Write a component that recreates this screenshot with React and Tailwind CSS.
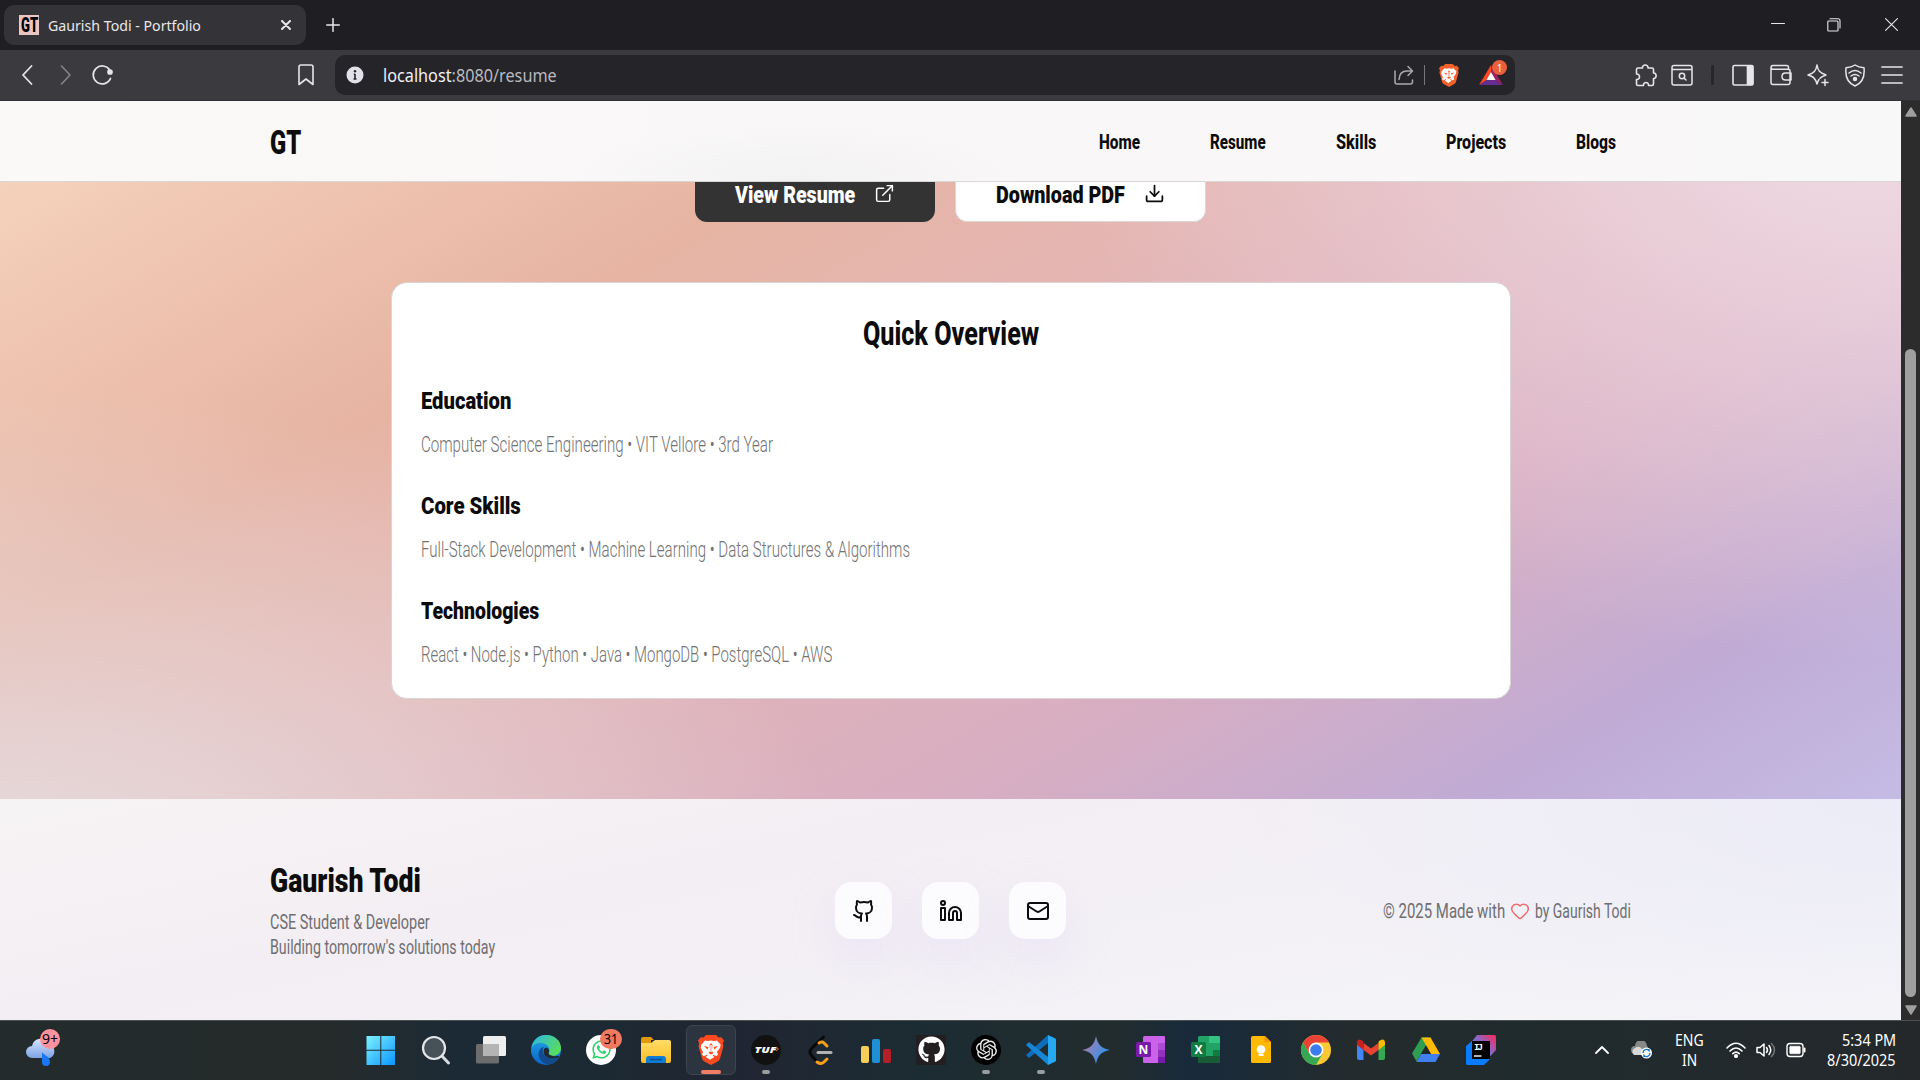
import React, { useLayoutEffect, useRef, useState } from "react";
import { ExternalLink, Download, Github, Linkedin, Mail, Heart } from "lucide-react";
import { SiOpenai } from "react-icons/si";
import { FaWhatsapp, FaGithub } from "react-icons/fa";

/* Text condensed or stretched so that it fills the width given by its class. */
function Fit({ className = "", children }) {
  const outer = useRef(null);
  const inner = useRef(null);
  const [scale, setScale] = useState(1);
  useLayoutEffect(() => {
    setScale(outer.current.getBoundingClientRect().width / inner.current.offsetWidth);
  }, [children]);
  return (
    <span ref={outer} className={"block shrink-0 whitespace-nowrap " + className}>
      <span ref={inner} className="inline-block origin-left" style={{ transform: `scaleX(${scale})` }}>
        {children}
      </span>
    </span>
  );
}

const Ico = ({ className = "", children, vb = "0 0 24 24", sw = 1.5 }) => (
  <svg viewBox={vb} fill="none" stroke="currentColor" strokeWidth={sw} strokeLinecap="round" strokeLinejoin="round" className={"block shrink-0 " + className}>
    {children}
  </svg>
);

const Brave = ({ className }) => (
  <svg viewBox="0 0 26 30" className={"block shrink-0 " + className}>
    <path d="M8 0h10l2.500 2.500 2.800-.3L26 5.500l-1.200 3 .7 2.500L22 23.500q-.5 1.700-2 2.700L13 30l-7-3.800q-1.500-1-2-2.700L.5 11l.7-2.500L0 5.500l2.700-3.300 2.800.3z" fill="currentColor" />
    <path d="M7 5.500l3 .6 3-.6 3 .6 3-.6 3.700 4.300-.7 3-3 4.200 1 2.800-2 1.500-2.500-1.500h-1.200l2 2.200-4.300 2.700-4.300-2.700 2-2.200H8.500L6 21.300l-2-1.500L5 17 2.700 12.800 3.300 9.800z" fill="#fff" />
    <path d="M6 11l4.500 1-1 2.500zM20 11l-4.500 1 1 2.500zM11.500 10l.7 6-1.700 2 2.500 1.500 2.500-1.500-1.700-2 .7-6-1.500-2z" fill="currentColor" />
    <path d="M12.300 10h1.400v7h-1.400z" fill="#fff" />
  </svg>
);

function TabStrip() {
  return (
    <div className="flex h-[50px] items-start bg-[#1f1e23] text-[#e8e8ea]">
      <div className="mt-[5px] ml-1 flex h-10 w-[302px] items-center rounded-[10px] bg-[#343338] pl-[15px]">
        <div className="flex h-5 w-5 items-center justify-center bg-[#eac5c3] font-['Roboto',sans-serif] text-[20px] leading-5 font-black text-black">
          <Fit className="w-[17px]">GT</Fit>
        </div>
        <Fit className="ml-[9px] w-[153px] pb-px font-['Noto_Sans',sans-serif] text-[15px] leading-5">Gaurish Todi - Portfolio</Fit>
        <Ico className="ml-20 h-[10px] w-[10px]" vb="0 0 10 10" sw={2}><path d="M1 1l8 8M9 1l-8 8" /></Ico>
      </div>
      <Ico className="mt-[18px] ml-[20px] h-[14px] w-[14px]" vb="0 0 14 14" sw={1.5}><path d="M7 .7v12.6M.7 7h12.6" /></Ico>
      <Ico className="mt-[17px] ml-auto h-[14px] w-[14px]" vb="0 0 14 14" sw={1}><path d="M.5 6.5h13" /></Ico>
      <Ico className="mt-[18px] ml-[42px] h-[14px] w-[14px]" vb="0 0 14 14" sw={1.1}><path d="M1.5 3h8.5q1 0 1 1v8.400q0 .6-.7.6H1.500q-.7 0-.7-.7V3.700q0-.7.7-.7zM3 .8h8q2 0 2 2V10" /></Ico>
      <Ico className="mt-[18px] mr-[22px] ml-[44px] h-[13px] w-[13px]" vb="0 0 14 14" sw={1.2}><path d="M.6.6l12.800 12.800M13.400.6L.6 13.400" /></Ico>
    </div>
  );
}

function Toolbar() {
  return (
    <div className="flex h-[51px] items-center border-b border-[#302f35] bg-[#3b3a3f] text-[#e6e6e8]">
      <Ico className="ml-[21px] h-5 w-3" vb="0 0 12 20" sw={1.8}><path d="M10.500 1L2 10l8.500 9" /></Ico>
      <Ico className="ml-[27px] h-5 w-3 text-[#858489]" vb="0 0 12 20" sw={1.600}><path d="M1.500 1L10 10l-8.500 9" /></Ico>
      <Ico className="ml-[19px] h-[22px] w-[22px]" vb="0 0 22 22" sw={1.7}><path d="M19.500 14.500a9 9 0 1 1-.8-8.600" /><circle cx="19" cy="8" r="2" fill="currentColor" /></Ico>
      <Ico className="ml-[185px] h-[22px] w-4" vb="0 0 16 22" sw={1.600}><path d="M3 1h10q2 0 2 2v17.500l-7-5.500-7 5.500V3q0-2 2-2z" /></Ico>
      <div className="ml-[21px] flex h-10 w-[1180px] items-center rounded-[10px] bg-[#252429]">
        <svg viewBox="0 0 18 18" className="ml-[11px] h-[18px] w-[18px]"><circle cx="9" cy="9" r="8.500" fill="#e2e0e8" /><path d="M9 8v5M7.800 8.200H9M7.500 13h3" stroke="#252429" strokeWidth="1.600" fill="none" /><circle cx="9" cy="5.300" r="1.200" fill="#252429" /></svg>
        <Fit className="ml-[19px] w-[174px] pb-px font-['Noto_Sans',sans-serif] text-[18px] leading-6 text-[#b9b9be]"><span className="text-[#f0f0f2]">localhost</span>:8080/resume</Fit>
        <Ico className="ml-auto h-5 w-5 text-[#aaa9ad]" vb="0 0 20 20" sw={1.500}><path d="M1 6v11q0 2 2 2h13.500q2 0 2-2v-2M5 14.500q.5-8.500 8-8.500h5M14 1.500l4.500 4.500L14 10.500" /></Ico>
        <span className="mr-[14px] ml-[10px] h-5 w-px bg-[#77767b]" />
        <Brave className="h-[23px] w-[20px] text-[#f2602c]" />
        <div className="relative mr-[12px] ml-[20px] h-[20px] w-6">
          <svg viewBox="0 0 24 20" className="h-5 w-6"><path d="M12 0L0 20l8-5 4-8z" fill="#ff4724" /><path d="M12 0v7l4 8 8 5z" fill="#9e1f63" /><path d="M0 20h24l-8-5H8z" fill="#662d91" /><path d="M12 7l-4.500 8h9z" fill="#fff" /></svg>
          <span className="absolute top-[-5px] left-[13px] flex h-[15px] w-[15px] items-center justify-center rounded-full bg-[#ec5f3d] font-['Noto_Sans',sans-serif] text-[10px] leading-none text-white">1</span>
        </div>
      </div>
      <div className="ml-auto flex items-center">
        <Ico className="h-[23px] w-[22px]" vb="0 0 22 23" sw={1.600}><path d="M3 4h4.500c-.5-4 6-4 5.500 0H17q1.500 0 1.500 1.500V9c3.500-.5 3.500 6 0 5.500V20q0 1.500-1.500 1.500h-3.500c.5-4-5.500-4-5 0H3q-1.500 0-1.500-1.500v-4.500c4 .5 4-6 0-5.500V5.500Q1.500 4 3 4z" /></Ico>
        <Ico className="ml-[14px] h-[22px] w-[22px]" vb="0 0 22 22" sw={1.500}><path d="M3 1.500h16q2 0 2 2V19q0 2-2 2H3q-2 0-2-2V3.500q0-2 2-2zM1 5.500h20M13 14l2 2" /><circle cx="11" cy="12" r="2.700" /></Ico>
        <span className="mr-[18px] ml-[18px] h-5 w-[3px] rounded bg-[#27262b]" />
        <Ico className="h-[22px] w-[22px]" vb="0 0 22 22" sw={1.600}><rect x="1" y="1.500" width="20" height="19.500" rx="1.500" /><path d="M15.500 2h5v18.500h-5z" fill="currentColor" /></Ico>
        <Ico className="ml-4 h-[22px] w-[22px]" vb="0 0 22 22" sw={1.500}><path d="M1 3.500V18.500q0 2 2 2h15q2 0 2-2V7q0-1.700-2-1.700H3Q1 5.300 1 3.500t2-2h13.500q2 0 2 2v1.500M21 9h-5.500q-3.500 0-3.500 3.500t3.500 3.500H21z" /></Ico>
        <Ico className="ml-[15px] h-[23px] w-[22px]" vb="0 0 22 23" sw={1.500}><path d="M10 1c1 6 2.500 7.500 9 10-3 1-4.500 1.500-6 3.200M10 1c-1 6-3 8-9 10 5 1.500 7 2.500 9 9 .7-2 1-3 2-4.500" /><path d="M18 15.500v6M15 18.500h6" /></Ico>
        <Ico className="ml-[15px] h-[23px] w-[22px]" vb="0 0 22 23" sw={1.500}><path d="M11 1c3 2 5.500 2.500 9 2.800 1 9-1.500 15-9 18.200C3.500 18.800 1 12.800 2 3.800 5.500 3.500 8 3 11 1zM5 9q6-5 12 0M7 12q4-3 8 0" /><circle cx="11" cy="15" r="1.500" fill="currentColor" /></Ico>
        <Ico className="mr-[17px] ml-[15px] h-[20px] w-[22px]" vb="0 0 22 20" sw={1.700}><path d="M1 2h20M1 10h20M1 18h20" /></Ico>
      </div>
    </div>
  );
}

function SiteNav() {
  return (
    <nav className="z-10 flex h-[81px] shrink-0 items-center border-b border-[#d9d6d6] bg-[radial-gradient(ellipse_220px_60px_at_800px_81px,#f3f2f2_0%,#f3f2f200_100%),linear-gradient(90deg,#faf9f7_0%,#f9f7f8_50%,#f9f8f9_100%)] pt-[2px] pl-[270px] font-['Roboto',sans-serif] font-black text-[#0c0c0c]">
      <Fit className="w-[31px] pt-px text-[33px] leading-[40px]">GT</Fit>
      <div className="ml-auto flex gap-[70px] pt-[2px] pr-[285px] text-[19.5px] leading-7 font-extrabold">
        <Fit className="w-[41px]">Home</Fit>
        <Fit className="w-[56px]">Resume</Fit>
        <Fit className="w-[40px]">Skills</Fit>
        <Fit className="w-[60px]">Projects</Fit>
        <Fit className="w-[40px]">Blogs</Fit>
      </div>
    </nav>
  );
}

const SECTIONS = [
  ["Education", "w-[90px]", "Computer Science Engineering • VIT Vellore • 3rd Year", "w-[352px]"],
  ["Core Skills", "w-[100px]", "Full-Stack Development • Machine Learning • Data Structures & Algorithms", "w-[489px]"],
  ["Technologies", "w-[118px]", "React • Node.js • Python • Java • MongoDB • PostgreSQL • AWS", "w-[411px]"],
];

function Resume() {
  return (
    <main className="flex h-[617px] shrink-0 flex-col font-['Roboto',sans-serif] text-[#0c0c0c]">
      <div className="-mt-[24px] flex h-16 justify-center gap-[20px] font-black">
        <div className="flex w-[240px] items-center rounded-xl bg-[#333] pt-[9px] pl-10 text-white">
          <Fit className="w-[120px] text-[24.5px] leading-8">View Resume</Fit>
          <ExternalLink className="mb-[2px] ml-[19px] h-[21px] w-[21px]" strokeWidth={1.7} />
        </div>
        <div className="flex w-[251px] items-center rounded-xl border border-[#dcd8d8] bg-white pt-[9px] pl-10">
          <Fit className="w-[129px] text-[24.5px] leading-8">Download PDF</Fit>
          <Download className="mb-[2px] ml-[19px] h-[21px] w-[21px]" strokeWidth={2} />
        </div>
      </div>
      <section className="mx-auto mt-[60px] h-[417px] w-[1120px] rounded-2xl border border-[#d9d5d6] bg-white px-[29px] pt-[33px]">
        <h2 className="flex justify-center text-[33px] leading-9 font-extrabold"><Fit className="w-[176px]">Quick Overview</Fit></h2>
        <div className="mt-[35px] flex flex-col gap-[33px]">
          {SECTIONS.map(([title, tw, text, dw]) => (
            <div key={title} className="flex flex-col gap-4">
              <h3 className="text-[24.7px] leading-7 font-black"><Fit className={tw}>{title}</Fit></h3>
              <p className="text-[22px] leading-7 font-light text-[#737373]"><Fit className={dw}>{text}</Fit></p>
            </div>
          ))}
        </div>
      </section>
    </main>
  );
}

const Tile = ({ children }) => (
  <div className="flex h-[57px] w-[57px] items-center justify-center rounded-2xl bg-[#fcfbfd] text-[#0c0c0c] shadow-[0_20px_40px_rgba(222,208,250,0.35)]">{children}</div>
);

function Footer() {
  return (
    <footer className="grid h-[221px] shrink-0 grid-cols-[1fr_auto_1fr] items-center bg-[radial-gradient(ellipse_700px_260px_at_1901px_0px,#ececf8_0%,#ececf800_100%),linear-gradient(168deg,#f6f3f4_0%,#f3eef3_35%,#f3f2f6_75%,#f5f5f8_100%)] pt-[2px] pr-[270px] pl-[270px] font-['Roboto',sans-serif] text-[#6f6e72]">
      <div className="flex flex-col">
        <Fit className="w-[151px] text-[33px] leading-10 font-black text-[#0c0c0c]">Gaurish Todi</Fit>
        <Fit className="mt-[9px] w-[160px] text-[19.5px] leading-[25px]">CSE Student &amp; Developer</Fit>
        <Fit className="w-[225px] text-[19.5px] leading-[25px]">Building tomorrow&apos;s solutions today</Fit>
      </div>
      <div className="flex gap-[30px]">
        <Tile><Github className="h-6 w-6" /></Tile>
        <Tile><Linkedin className="h-6 w-6" /></Tile>
        <Tile><Mail className="h-6 w-6" /></Tile>
      </div>
      <div className="flex items-center justify-end text-[19.5px] leading-7">
        <Fit className="w-[122px] pt-[2px]">© 2025 Made with</Fit>
        <Heart className="mx-[5px] h-5 w-5 text-[#ef6b6b]" strokeWidth={1.800} />
        <Fit className="w-[96px] pt-[2px]">by Gaurish Todi</Fit>
      </div>
    </footer>
  );
}

function Scrollbar() {
  return (
    <div className="flex w-[19px] flex-col items-center bg-[#2c2c2c]">
      <svg viewBox="0 0 12 10" className="mt-[6px] h-[10px] w-3"><path d="M6 1l5 8H1z" fill="#9f9f9f" stroke="#9f9f9f" strokeWidth="1.500" strokeLinejoin="round" /></svg>
      <div className="mt-[232px] h-[648px] w-[11px] rounded-full bg-[#9f9f9f]" />
      <svg viewBox="0 0 12 10" className="mt-[8px] h-[10px] w-3"><path d="M6 9l5-8H1z" fill="#9f9f9f" stroke="#9f9f9f" strokeWidth="1.500" strokeLinejoin="round" /></svg>
    </div>
  );
}

const G = ({ id, a, b, x2 = 0, y2 = 1 }) => (
  <linearGradient id={id} x1="0" y1="0" x2={x2} y2={y2}><stop stopColor={a} /><stop offset="1" stopColor={b} /></linearGradient>
);
const Pic = ({ children }) => <svg viewBox="0 0 30 30" className="h-[30px] w-[30px] overflow-visible">{children}</svg>;
const Office = ({ letter, colors, tab }) => (
  <Pic>
    <rect x="7" y="1" width="22" height="27" rx="1.500" fill={colors[0]} />
    <path d="M18 1h9.500q1.500 0 1.500 1.500V8H18z" fill={colors[1]} />
    <path d="M22 8h7v7h-7z" fill={colors[2]} /><path d="M22 15h7v7h-7z" fill={colors[3]} />
    <path d={tab} fill={colors[4]} />
    <rect x="0" y="7" width="15" height="15" rx="1.500" fill={colors[5]} />
    <text x="7.500" y="19" textAnchor="middle" fontSize="12" fontWeight="700" fontFamily="Open Sans, sans-serif" fill="#fff">{letter}</text>
  </Pic>
);

const APPS = [
  { el: <Pic><defs><G id="win" a="#7df2ff" b="#0a95ff" x2={1} /></defs><path d="M.5 1h13.800v13.800H.5zM15.300 1H29v13.800H15.300zM.5 15.800h13.800V30H.5zM15.300 15.800H29V30H15.300z" fill="url(#win)" /></Pic> },
  { el: <Pic><path d="M20 20l7.500 8" stroke="#d9dbdf" strokeWidth="3" strokeLinecap="round" /><circle cx="13" cy="13" r="11" fill="#47515a" stroke="#e5e6e8" strokeWidth="2.200" /></Pic> },
  { el: <Pic><rect x="0" y="9" width="23" height="19.500" rx="1.500" fill="#6c6c6c" /><rect x="7" y="1" width="23" height="20" rx="1.500" fill="#eee" /><path d="M7 9h16v12H7z" fill="#b4b4b4" /></Pic> },
  { el: <Pic><defs><G id="ed" a="#22a7e5" b="#0b63c9" /><G id="ed2" a="#28b6ea" b="#58dc60" x2={1} y2={0.5} /></defs><circle cx="15" cy="15" r="15" fill="url(#ed)" /><path d="M.5 13C2 4 8 0 15 0c9 0 15 6 15 13 0 5-4 8-9 8-4 0-4-2-3-4 2-5-3-9-8-9-5 0-8 2-9.500 5z" fill="url(#ed2)" /><path d="M28 22c-5 3-14 2-16-4-1-3 0-5 1-6-5 1-7 7-4 12 4 7 14 8 19-2z" fill="#124a8e" /><path d="M13 14c-2 6 3 11 13 9l2-1c1-2-3 0-6-1-4-1-5-2-4-4 1-3-3-6-5-3z" fill="#1f2a31" /></Pic> },
  { el: <div className="relative"><div className="flex h-[30px] w-[30px] items-center justify-center rounded-full bg-white"><FaWhatsapp className="h-[21px] w-[21px] text-[#2bd368]" /></div><span className="absolute -top-[6px] left-[14px] flex h-5 w-[22px] items-center justify-center rounded-full bg-[#f0795f] font-['Noto_Sans',sans-serif] text-[14px] leading-none text-black"><Fit className="w-[14px]">31</Fit></span></div> },
  { el: <Pic><defs><G id="fo" a="#ffdc68" b="#fcbf25" /></defs><path d="M0 4q0-2 2-2h8l3 3h-3v8H0z" fill="#e09a07" /><path d="M0 8h10l4-3h14q2 0 2 2v19q0 2-2 2H2q-2 0-2-2z" fill="url(#fo)" /><path d="M5 28v-4q0-3 3-3h14q3 0 3 3v4z" fill="#117cd4" /><path d="M9 24.500h12" stroke="#075092" strokeWidth="1.500" /></Pic> },
  { el: <Brave className="h-[30px] w-[26px] text-[#fb4a20]" />, active: true },
  { el: <Pic><circle cx="15" cy="15" r="15" fill="#111" /><text x="14.500" y="18.300" textAnchor="middle" fontSize="9.500" fontWeight="800" fontStyle="italic" fontFamily="Open Sans, sans-serif" fill="#fff" textLength="22" lengthAdjust="spacingAndGlyphs">TUF</text><path d="M25 12l2.500 2-2.500 2" stroke="#e2643c" fill="none" /></Pic>, dot: true },
  { el: <Pic><path d="M17.500 2L5.500 13.500q-3 3.500 0 7l5.500 6" stroke="#090909" strokeWidth="3" fill="none" strokeLinecap="round" /><path d="M13 8q3-2 5 0l3 3M11 27q4 3 7 0l3-3" stroke="#f79f1c" strokeWidth="3" fill="none" strokeLinecap="round" /><path d="M12 17.500h13" stroke="#b3b3b3" strokeWidth="3" strokeLinecap="round" /></Pic> },
  { el: <Pic><rect x="0" y="11" width="8" height="17" rx="2" fill="#f6cf59" /><rect x="11" y="4" width="8" height="24" rx="2" fill="#1f90d3" /><rect x="22" y="14" width="8" height="14" rx="2" fill="#b51f2a" /></Pic> },
  { el: <div className="flex h-[30px] w-[30px] items-center justify-center bg-[#231f20]"><FaGithub className="h-[27px] w-[27px] text-white" /></div> },
  { el: <div className="flex h-[30px] w-[30px] items-center justify-center rounded-full bg-black"><SiOpenai className="h-[21px] w-[21px] text-[#eee]" /></div>, dot: true },
  { el: <Pic><path d="M22 0v8L3 23l-3-3z" fill="#0f6ebb" /><path d="M3 7l19 15v8L0 10z" fill="#1586d5" /><path d="M22 0l7 3.200q1 .5 1 1.500v20.600q0 1-1 1.500L22 30z" fill="#27a9f1" /></Pic>, dot: true },
  { el: <Pic><defs><G id="gem" a="#c279a5" b="#2b94ec" x2={1} y2={0.5} /></defs><path d="M15 1c1.500 8 5 12.500 14 14-9 1.500-12.500 6-14 14-1.500-8-5-12.500-14-14 9-1.500 12.500-6 14-14z" fill="url(#gem)" /></Pic> },
  { el: <Office letter="N" colors={["#ca62ea", "#ca62ea", "#ae4bd5", "#9332bf", "#7719aa", "#7a1aab"]} tab="M22 22h7v4.500q0 1.500-1.500 1.500H22z" /> },
  { el: <Office letter="X" colors={["#21a366", "#33c481", "#21a366", "#107c41", "#185c37", "#107c41"]} tab="M7 21h22v5.500q0 1.500-1.500 1.500h-19Q7 28 7 26.500z" /> },
  { el: <Pic><path d="M7 1h12l6 6v19.500q0 1.500-1.500 1.500h-17Q5 28 5 26.500v-24Q5 1 7 1z" fill="#ffba00" /><path d="M18.500 1l6.500 6h-6.500z" fill="#f79400" /><circle cx="15" cy="14.500" r="4.300" fill="#fff" /><path d="M12.500 20h5" stroke="#fff" strokeWidth="2" /></Pic> },
  { el: <Pic><circle cx="15" cy="15" r="15" fill="#fcc934" /><path d="M2 7.500A15 15 0 0 1 28 7.500H15L8.500 18.700z" fill="#ea4335" /><path d="M2 7.500A15 15 0 0 0 15 30l6.500-11.200L8.500 18.700z" fill="#34a853" /><circle cx="15" cy="15" r="7.400" fill="#fff" /><circle cx="15" cy="15" r="5.800" fill="#3b7ded" /></Pic> },
  { el: <Pic><path d="M1 9v14q0 2 2 2h4.500V12z" fill="#4285f4" /><path d="M29 9v14q0 2-2 2h-4.500V12z" fill="#34a853" /><path d="M7.500 8l7.500 5.500L22.500 8v7L15 20.500 7.500 15z" fill="#ea4335" /><path d="M1 10V7q1-4 5-1.500l1.500 1.200V15z" fill="#c5221f" /><path d="M29 10V7q-1-4-5-1.500l-1.500 1.200V15z" fill="#fbbc04" /></Pic> },
  { el: <Pic><path d="M10.500 2.500h9l-4.500 8-9.500 16L1 18.500z" fill="#2f9e50" /><path d="M10.500 2.500h9L29 19h-9z" fill="#ffba00" /><path d="M5.500 27l4.500-8h19l-4.500 8z" fill="#3f7ff0" /><path d="M15 10.500L19.800 19H10z" fill="#20282c" /></Pic> },
  { el: <Pic><defs><linearGradient id="ij" x1="0.2" y1="0.800" x2="1" y2="0"><stop stopColor="#5b6fd6" /><stop offset=".5" stopColor="#8a66c4" /><stop offset="1" stopColor="#ff2659" /></linearGradient></defs><path d="M11 0h17.500q1.500 0 1.500 1.500V15L18 28 3 10z" fill="url(#ij)" /><path d="M0 11l6-5v18h18l-6 6H1.500Q0 30 0 28.500z" fill="#0a7cff" /><rect x="6" y="6" width="18" height="18" fill="#000" /><text x="8" y="14.500" fontSize="9" fontWeight="700" fontFamily="Liberation Mono, monospace" fill="#fff" textLength="9">IJ</text><path d="M8 21h7.500" stroke="#fff" strokeWidth="1.400" /></Pic> },
];

function Taskbar() {
  return (
    <div className="flex h-[60px] items-center border-t border-[#4a5153] bg-[linear-gradient(90deg,#232b2c_0%,#252b2b_17%,#1c2a36_24%,#1b2a33_30%,#202532_38%,#1c2c33_48%,#222c2d_58%,#182a3b_62%,#242b2c_71%,#202b2e_79%,#24282b_100%)] pb-[2px] font-['Noto_Sans',sans-serif] text-white">
      <div className="relative ml-[26px] h-[30px] w-[30px]">
        <svg viewBox="0 0 30 30" className="h-[30px] w-[30px]"><defs><G id="cl" a="#d7e4fb" b="#7ea3e6" /></defs><path d="M6 23a6 6 0 0 1 0-12A9 9 0 0 1 23 9a7.500 7.500 0 0 1 1 14z" fill="url(#cl)" /></svg>
        <svg viewBox="0 0 10 14" className="absolute top-[17px] left-[15px] h-[14px] w-[10px]"><path d="M1 0q1 2 6 5 2 2 2 5a4 4 0 0 1-8 0z" fill="#1976f5" /></svg>
        <span className="absolute -top-[6px] left-[14px] flex h-5 w-5 items-center justify-center rounded-full bg-[#ff929c] text-[14px] leading-none text-black"><Fit className="w-[16px]">9+</Fit></span>
      </div>
      <div className="ml-[297.5px] flex">
        {APPS.map(({ el, active, dot }, i) => (
          <div key={i} className="relative flex h-[50px] w-[55px] items-center justify-center">
            {active && <span className="absolute inset-y-0 left-[2.5px] w-[50px] rounded-md border border-[#3b454e] bg-[#2c353f]" />}
            <span className="relative">{el}</span>
            {active && <span className="absolute bottom-[1px] left-[17.5px] h-1 w-5 rounded-full bg-[#f27d66]" />}
            {dot && <span className="absolute bottom-[1px] left-[23.5px] h-1 w-2 rounded-full bg-[#9a9da0]" />}
          </div>
        ))}
      </div>
      <div className="ml-auto flex items-center pr-[24px]">
        <Ico className="h-[9px] w-[14px]" vb="0 0 14 9" sw={1.800}><path d="M1 8l6-6 6 6" /></Ico>
        <svg viewBox="0 0 22 18" className="ml-[22px] h-[18px] w-[22px]"><path d="M4 13a4 4 0 0 1 0-8A6 6 0 0 1 16 5q2 2 2 8z" fill="#888" /><path d="M3 14a4 4 0 0 1 1-7q4-3 7 1l3 6z" fill="#d8d8d8" /><circle cx="15.500" cy="12" r="5.500" fill="#fff" /><path d="M12 12a3.500 3.500 0 0 1 6-2.500V8m1 4a3.500 3.500 0 0 1-6 2.500V16" stroke="#1677d2" strokeWidth="1.400" fill="none" /></svg>
        <div className="ml-[21px] flex w-[30px] flex-col items-center text-[15.5px] leading-5">
          <Fit className="w-[29px]">ENG</Fit>
          <Fit className="w-[15px]">IN</Fit>
        </div>
        <Ico className="ml-[22px] h-4 w-5" vb="0 0 20 16" sw={1.600}><path d="M1 6q9-9.500 18 0M4 9q6-6 12 0M6.800 11.700q3.200-3 6.400 0" /><circle cx="10" cy="14" r="1.300" fill="currentColor" /></Ico>
        <Ico className="ml-[10px] h-4 w-5" vb="0 0 20 16" sw={1.500}><path d="M1 5.500h3L8 2v12l-4-3.500H1zM10.500 5.500q2 2.500 0 5M13 3.500q3.500 4.500 0 9" /><path d="M15.500 1.500q6 6.500 0 13" stroke="#70757a" /></Ico>
        <Ico className="ml-[10px] h-4 w-5" vb="0 0 20 16" sw={1.400}><rect x="1" y="1.500" width="16" height="13" rx="3" /><rect x="3.700" y="4.200" width="10.600" height="7.600" rx="1" fill="currentColor" strokeWidth="0.500" /><path d="M18.500 6.500v3" strokeWidth="2" /></Ico>
        <div className="ml-[21px] flex w-[69px] flex-col items-end text-[15.5px] leading-5">
          <Fit className="w-[54px]">5:34 PM</Fit>
          <Fit className="w-[69px]">8/30/2025</Fit>
        </div>
      </div>
    </div>
  );
}

export default function App() {
  return (
    <div className="flex h-[1080px] w-[1920px] flex-col overflow-hidden">
      <TabStrip />
      <Toolbar />
      <div className="flex h-[919px]">
        <div className="flex w-[1901px] flex-col bg-[radial-gradient(ellipse_850px_520px_at_0px_800px,#e6dadd_0%,#e6dadde0_20%,#e6dadd00_100%),radial-gradient(ellipse_850px_560px_at_1901px_0px,#efdae3_0%,#efdae3e0_20%,#efdae300_100%),linear-gradient(150deg,#f7dac6_0%,#f4d0ba_5%,#e7b4a3_26%,#e4b5b3_40%,#d8aec2_62%,#c0abd5_77%,#c5bee7_91%)]">
          <SiteNav />
          <Resume />
          <Footer />
        </div>
        <Scrollbar />
      </div>
      <Taskbar />
    </div>
  );
}
